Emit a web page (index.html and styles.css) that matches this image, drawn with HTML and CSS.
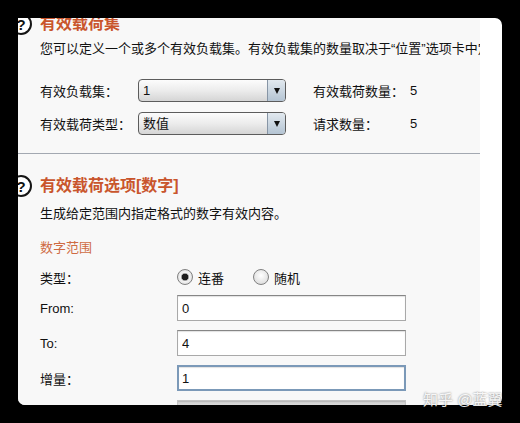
FILE: index.html
```html
<!DOCTYPE html>
<html lang="zh-CN">
<head>
    <meta charset="UTF-8">
    <meta name="viewport" content="width=device-width, initial-scale=1.0">
    <title>有效载荷</title>
    <link rel="stylesheet" href="styles.css">
</head>
<body>
    <div class="window">
        <div class="view">
            <div class="pane">
                <div class="section-head">
                    <span class="help">?</span>
                    <h2>有效载荷集</h2>
                </div>
                <p class="desc">您可以定义一个或多个有效负载集。有效负载集的数量取决于“位置”选项卡中定义的攻击类型。</p>

                <div class="set-grid">
                    <span>有效负载集：</span>
                    <div class="combo"><span class="value">1</span><span class="arrow"></span></div>
                    <span>有效载荷数量：</span>
                    <span>5</span>

                    <span>有效载荷类型：</span>
                    <div class="combo"><span class="value">数值</span><span class="arrow"></span></div>
                    <span>请求数量：</span>
                    <span>5</span>
                </div>

                <hr class="divider">

                <div class="section-head second">
                    <span class="help">?</span>
                    <h2>有效载荷选项[数字]</h2>
                </div>
                <p class="desc tight">生成给定范围内指定格式的数字有效内容。</p>

                <div class="subhead">数字范围</div>

                <div class="opt-grid">
                    <span>类型：</span>
                    <div class="radios">
                        <span class="radio checked">连番</span>
                        <span class="radio">随机</span>
                    </div>

                    <span>From:</span>
                    <input class="field" type="text" value="0">

                    <span>To:</span>
                    <input class="field" type="text" value="4">

                    <span>增量：</span>
                    <input class="field focused" type="text" value="1">

                    <span></span>
                    <div class="field disabled"></div>
                </div>
            </div>
        </div>
    </div>
    <div class="watermark">知乎 @蓝翼</div>
</body>
</html>
```

FILE: styles.css
```css
* {
    box-sizing: border-box;
}

body {
    margin: 0;
    width: 520px;
    height: 423px;
    overflow: hidden;
    position: relative;
    background: #000;
    font-family: "Liberation Sans", "Noto Sans CJK SC", sans-serif;
    font-size: 13px;
    color: #111;
}

.window {
    margin: 18px 0 0 18px;
    width: 484px;
    height: 387px;
    background: #fff;
    border-radius: 0 7px 7px 7px;
    overflow: hidden;
}

.view {
    width: 462px;
    height: 387px;
    background: #f8f8f8;
    overflow: hidden;
}

/* scrolled a little: top title and help icons are clipped */
.pane {
    margin-top: -5px;
    padding-left: 22px;
}

.section-head {
    display: flex;
    align-items: center;
    gap: 8px;
    height: 22px;
}

.section-head.second {
    margin-top: 21px;
}

.help {
    flex: none;
    margin-left: -30px;
    width: 22px;
    height: 22px;
    border: 2px solid #151515;
    border-radius: 50%;
    background: #fff;
    display: flex;
    align-items: center;
    justify-content: center;
    font-size: 15px;
    font-weight: bold;
    line-height: 1;
}

.section-head h2 {
    margin: 0;
    font-size: 16px;
    font-weight: bold;
    line-height: 22px;
    color: #c9552c;
    white-space: nowrap;
}

.desc {
    margin: 5px 0 0;
    line-height: 18px;
    white-space: nowrap;
}

.desc.tight {
    margin-top: 8px;
}

.set-grid {
    display: grid;
    grid-template-columns: 98px 175px 97px auto;
    grid-auto-rows: 23px;
    row-gap: 10px;
    align-items: center;
    margin-top: 21px;
}

.combo {
    width: 148px;
    height: 23px;
    display: flex;
    border: 1px solid #5c5c5c;
    border-radius: 4px;
    overflow: hidden;
    background: linear-gradient(#fcfcfc, #ececec 50%, #d5d5d5);
}

.combo .value {
    flex: 1;
    padding-left: 4px;
    line-height: 21px;
}

.combo .arrow {
    width: 18px;
    border-left: 1px solid #8795a5;
    background: linear-gradient(#e2e9ef, #b4c4d3);
    display: flex;
    align-items: center;
    justify-content: center;
}

.combo .arrow::after {
    content: "";
    border-left: 3.5px solid transparent;
    border-right: 3.5px solid transparent;
    border-top: 6px solid #111;
}

.divider {
    margin: 18px 0 0 -22px;
    height: 1px;
    border: 0;
    background: #a3a8b1;
}

.subhead {
    margin-top: 16px;
    line-height: 18px;
    color: #cf6b43;
}

.opt-grid {
    display: grid;
    grid-template-columns: 137px 229px;
    grid-template-rows: 18px repeat(4, 26px);
    row-gap: 9px;
    align-items: center;
    margin-top: 11px;
}

.radios {
    display: flex;
    align-items: center;
    gap: 29px;
}

.radio {
    display: flex;
    align-items: center;
    gap: 5px;
}

.radio::before {
    content: "";
    width: 14px;
    height: 14px;
    border: 1px solid #808080;
    border-radius: 50%;
    background: radial-gradient(circle at 50% 40%, #ffffff, #d4d4d4);
}

.radio.checked::before {
    background: radial-gradient(circle, #1c1c1c 0 3px, #9a9a9a 3.5px, #f4f4f4 4.5px, #d0d0d0);
}

.field {
    width: 229px;
    height: 26px;
    margin: 0;
    padding: 0 4px;
    border: 1px solid #a9a9a9;
    border-top-color: #868686;
    background: #fff;
    box-shadow: inset 0 1px 1px rgba(0, 0, 0, 0.12);
    font-family: "Liberation Sans", sans-serif;
    font-size: 13px;
    color: #111;
    outline: none;
}

.field.focused {
    border: 2px solid #7b99b8;
    padding: 0 3px;
}

.field.disabled {
    border-color: #c4c4c4;
    background: linear-gradient(#cfcfcf, #e2e2e2 8px);
}

.watermark {
    position: absolute;
    left: 423px;
    top: 388px;
    font-size: 15px;
    color: rgba(255, 255, 255, 0.92);
    text-shadow: 0 0 2px rgba(0, 0, 0, 0.55);
    white-space: nowrap;
}
```
